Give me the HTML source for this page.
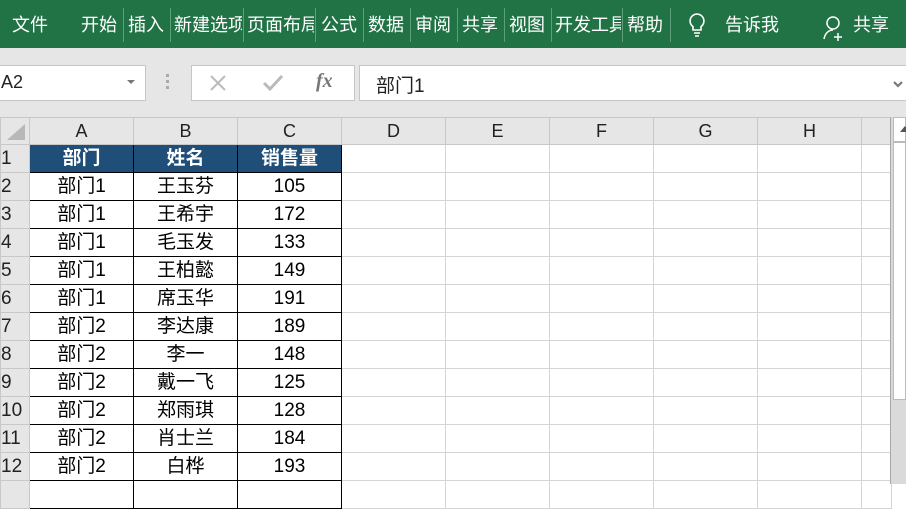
<!DOCTYPE html>
<html><head><meta charset="utf-8">
<style>
*{margin:0;padding:0;box-sizing:border-box}
body{width:906px;height:484px;overflow:hidden;background:#fff;font-family:"Liberation Sans","Noto Sans CJK SC",sans-serif;position:relative}
.rib{position:absolute;left:0;top:0;width:906px;height:48px;background:#217346;color:#fff;font-size:18px}
.rib span{position:absolute;top:14px;white-space:nowrap;overflow:hidden;line-height:22px}
.sep{position:absolute;top:8px;width:1px;height:34px;background:#5f9e7a}
.gray{position:absolute;left:0;top:48px;width:906px;height:69px;background:#e6e6e6}
.box{position:absolute;background:#fff;border:1px solid #c6c6c6}
.a{position:absolute}
table{position:absolute;left:0;top:117px;border-collapse:collapse;table-layout:fixed}
td{height:28px;padding:0;text-align:center;font-size:19px;border:1px solid #d4d4d4;color:#000;overflow:hidden;white-space:nowrap;line-height:26px}
tr.h td{height:26px;background:#e6e6e6;border-color:#c8c8c8;font-size:18px;color:#222}
td.rh{background:#e6e6e6;border-color:#c8c8c8;text-align:left;padding-left:0;font-size:19px;color:#222}
td.d{border:1px solid #000}
td.t{background:#1f4e78;color:#fff;font-weight:bold;border:1px solid #000}
</style></head><body>
<div class="rib">
<span style="left:12px">文件</span>
<span style="left:81px">开始</span><div class="sep" style="left:123px"></div>
<span style="left:128px">插入</span><div class="sep" style="left:170px"></div>
<span style="left:174px;width:68px">新建选项</span><div class="sep" style="left:243px"></div>
<span style="left:247px;width:67px">页面布局</span><div class="sep" style="left:315px"></div>
<span style="left:321px">公式</span><div class="sep" style="left:363px"></div>
<span style="left:368px">数据</span><div class="sep" style="left:410px"></div>
<span style="left:415px">审阅</span><div class="sep" style="left:457px"></div>
<span style="left:462px">共享</span><div class="sep" style="left:504px"></div>
<span style="left:509px">视图</span><div class="sep" style="left:551px"></div>
<span style="left:555px;width:66px">开发工具</span><div class="sep" style="left:622px"></div>
<span style="left:627px">帮助</span><div class="sep" style="left:670px"></div>
<svg class="a" style="left:687px;top:12px" width="20" height="26" viewBox="0 0 20 26" fill="none" stroke="#fff" stroke-width="1.6"><path d="M10 2a7 7 0 0 0-4 12.7V18h8v-3.3A7 7 0 0 0 10 2z"/><path d="M7 21h6M8 24h4"/></svg>
<span style="left:725px">告诉我</span>
<svg class="a" style="left:822px;top:15px" width="24" height="26" viewBox="0 0 24 26" fill="none" stroke="#fff" stroke-width="1.5"><circle cx="11" cy="8" r="6"/><path d="M2 24c1-6 5-9 9-9"/><path d="M16 18v8M12 22h8"/></svg>
<span style="left:853px">共享</span>
</div>
<div class="gray"></div>
<div class="box" style="left:-2px;top:65px;width:148px;height:36px"></div>
<div class="a" style="left:1px;top:72px;font-size:18px;color:#222">A2</div>
<div class="a" style="left:127px;top:80px;width:0;height:0;border-left:4px solid transparent;border-right:4px solid transparent;border-top:4px solid #777"></div>
<div class="a" style="left:166px;top:74px;width:3px;height:3px;background:#aaa;box-shadow:0 6px 0 #aaa,0 12px 0 #aaa"></div>
<div class="box" style="left:191px;top:65px;width:164px;height:36px"></div>
<svg class="a" style="left:208px;top:73px" width="20" height="20" viewBox="0 0 20 20" stroke="#bbb" stroke-width="2"><path d="M3 3l14 14M17 3L3 17"/></svg>
<svg class="a" style="left:262px;top:74px" width="22" height="18" viewBox="0 0 22 18" fill="none" stroke="#bbb" stroke-width="3"><path d="M2 9l6 6L20 2"/></svg>
<div class="a" style="left:316px;top:70px;font-family:'Liberation Serif',serif;font-style:italic;font-weight:bold;font-size:20px;color:#777">fx</div>
<div class="box" style="left:359px;top:65px;width:560px;height:36px"></div>
<div class="a" style="left:376px;top:71px;font-size:19px;color:#222">部门1</div>
<svg class="a" style="left:893px;top:81px" width="10" height="8" viewBox="0 0 10 8" fill="none" stroke="#777" stroke-width="2.2"><path d="M1 1l4 4 4-4"/></svg>
<div class="a" style="left:0;top:117px;width:906px;height:1px;background:#d0d0d0"></div>
<table>
<colgroup><col style="width:29px"><col style="width:104px"><col style="width:104px"><col style="width:104px"><col style="width:104px"><col style="width:104px"><col style="width:104px"><col style="width:104px"><col style="width:104px"><col style="width:30px"></colgroup>
<tr class="h"><td><svg width="28" height="26" style="display:block"><path d="M6 22L24 22L24 6Z" fill="#b8b8b8"/></svg></td><td>A</td><td>B</td><td>C</td><td>D</td><td>E</td><td>F</td><td>G</td><td>H</td><td></td></tr>
<tr><td class="rh">1</td><td class="t">部门</td><td class="t">姓名</td><td class="t">销售量</td><td></td><td></td><td></td><td></td><td></td><td></td></tr>
<tr><td class="rh">2</td><td class="d">部门1</td><td class="d">王玉芬</td><td class="d">105</td><td></td><td></td><td></td><td></td><td></td><td></td></tr>
<tr><td class="rh">3</td><td class="d">部门1</td><td class="d">王希宇</td><td class="d">172</td><td></td><td></td><td></td><td></td><td></td><td></td></tr>
<tr><td class="rh">4</td><td class="d">部门1</td><td class="d">毛玉发</td><td class="d">133</td><td></td><td></td><td></td><td></td><td></td><td></td></tr>
<tr><td class="rh">5</td><td class="d">部门1</td><td class="d">王柏懿</td><td class="d">149</td><td></td><td></td><td></td><td></td><td></td><td></td></tr>
<tr><td class="rh">6</td><td class="d">部门1</td><td class="d">席玉华</td><td class="d">191</td><td></td><td></td><td></td><td></td><td></td><td></td></tr>
<tr><td class="rh">7</td><td class="d">部门2</td><td class="d">李达康</td><td class="d">189</td><td></td><td></td><td></td><td></td><td></td><td></td></tr>
<tr><td class="rh">8</td><td class="d">部门2</td><td class="d">李一</td><td class="d">148</td><td></td><td></td><td></td><td></td><td></td><td></td></tr>
<tr><td class="rh">9</td><td class="d">部门2</td><td class="d">戴一飞</td><td class="d">125</td><td></td><td></td><td></td><td></td><td></td><td></td></tr>
<tr><td class="rh">10</td><td class="d">部门2</td><td class="d">郑雨琪</td><td class="d">128</td><td></td><td></td><td></td><td></td><td></td><td></td></tr>
<tr><td class="rh">11</td><td class="d">部门2</td><td class="d">肖士兰</td><td class="d">184</td><td></td><td></td><td></td><td></td><td></td><td></td></tr>
<tr><td class="rh">12</td><td class="d">部门2</td><td class="d">白桦</td><td class="d">193</td><td></td><td></td><td></td><td></td><td></td><td></td></tr>
<tr><td class="rh"></td><td class="d"></td><td class="d"></td><td class="d"></td><td></td><td></td><td></td><td></td><td></td><td></td></tr>
</table>
<div class="a" style="left:890px;top:117px;width:16px;height:367px;background:#dadada;border-left:1px solid #a8a8a8"></div>
<div class="a" style="left:893px;top:117px;width:13px;height:25px;background:#fff;border:1px solid #bbb"></div>
<div class="a" style="left:900px;top:126px;width:0;height:0;border-left:5px solid transparent;border-right:5px solid transparent;border-bottom:6px solid #555"></div>
<div class="a" style="left:893px;top:142px;width:13px;height:258px;background:#fff;border:1px solid #bbb"></div>
</body></html>
